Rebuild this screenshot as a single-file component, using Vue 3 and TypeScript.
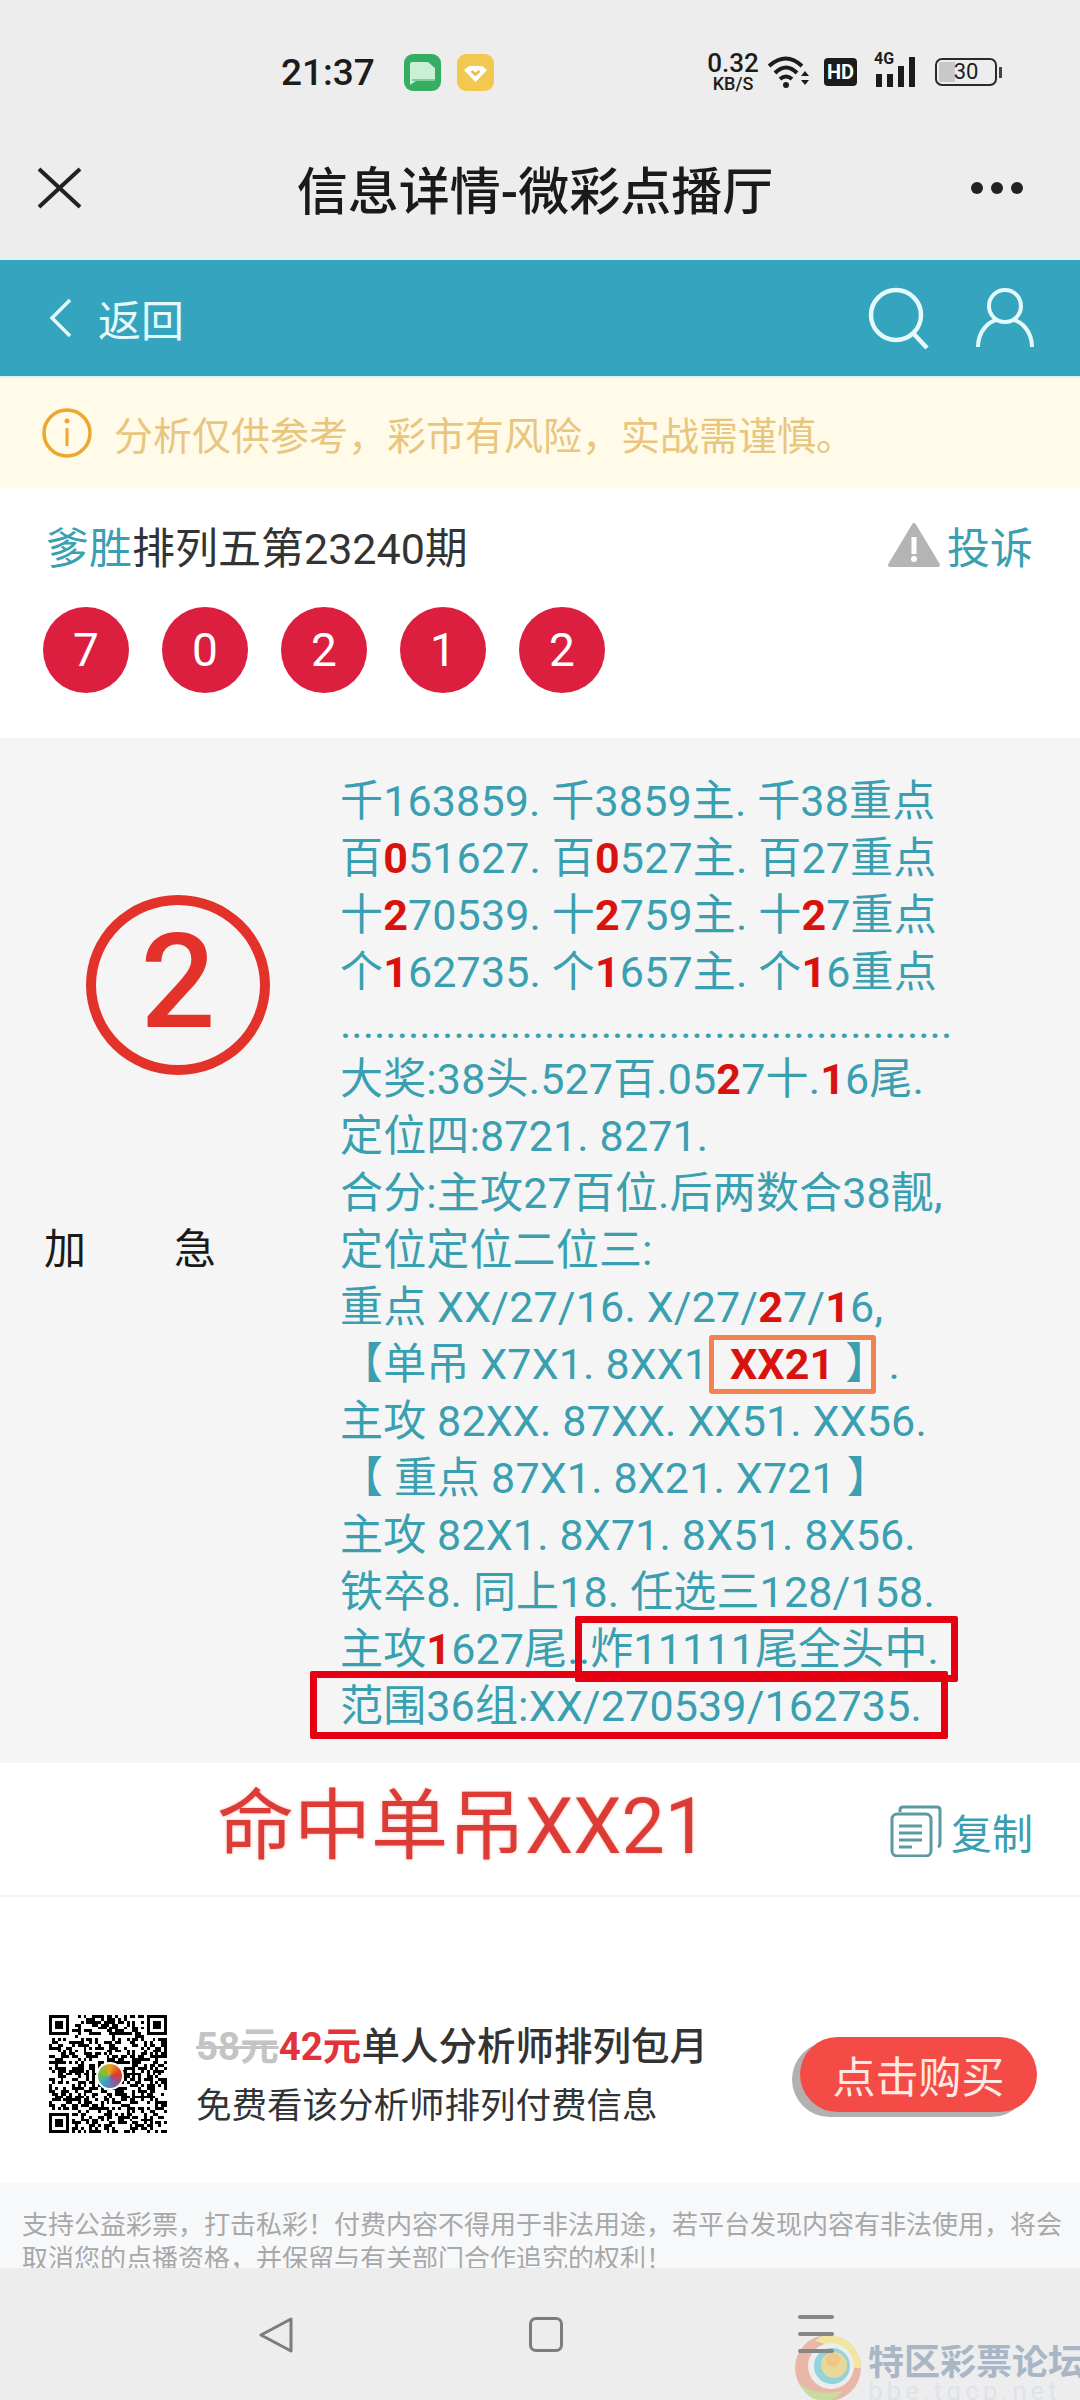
<template>
  <div class="page">
    <header class="top">
      <div class="status">
        <span class="time">21:37</span>
        <svg class="app-icon" width="37" height="37" viewBox="0 0 37 37">
          <rect width="37" height="37" rx="9" fill="#35ae63" />
          <path d="M6 10q0-2 2-2h16l7 6v11q0 2-2 2H12l-6 4z" fill="#c9efd4" />
          <path d="M8 26h23" stroke="#7fd09b" stroke-width="2" />
        </svg>
        <svg class="app-icon yellow" width="37" height="37" viewBox="0 0 37 37">
          <rect width="37" height="37" rx="9" fill="#f2c94e" />
          <path d="M7 16l5-4h13l5 4-11.500 12z" fill="#fff" />
          <path d="M14.500 17l4 3.500 4-3.500" fill="none" stroke="#e8b850" stroke-width="2.500" />
        </svg>
        <div class="speed">
          <span class="speed-num">0.32</span>
          <span class="speed-unit">KB/S</span>
        </div>
        <svg class="wifi" width="44" height="34" viewBox="0 0 44 34">
          <path d="M1 11Q18-4 34 11M7 18Q18 7 29 18M12 24q6-5 12 0" fill="none" stroke="#1c1c1c" stroke-width="4" />
          <circle cx="18" cy="30" r="3" fill="#1c1c1c" />
          <path d="M33 21l4-5 4 5zM33 25l4 5 4-5z" fill="#1c1c1c" />
        </svg>
        <span class="hd">HD</span>
        <div class="signal">
          <span class="four-g">4G</span>
          <svg width="42" height="30" viewBox="0 0 42 30">
            <rect x="2" y="17" width="6" height="13" fill="#1c1c1c" />
            <rect x="13" y="17" width="6" height="13" fill="#1c1c1c" />
            <rect x="24" y="9" width="6" height="21" fill="#1c1c1c" />
            <rect x="35" y="0" width="6" height="30" fill="#1c1c1c" />
          </svg>
        </div>
        <div class="battery">
          <div class="battery-body"><span class="battery-fill"></span><span class="battery-num">30</span></div>
          <span class="battery-tip"></span>
        </div>
      </div>
      <div class="title-row">
        <svg width="46" height="42" viewBox="0 0 46 42">
          <path d="M2 2l41 38M43 2L2 40" stroke="#222" stroke-width="4" fill="none" />
        </svg>
        <h1 class="title">信息详情-微彩点播厅</h1>
        <div class="more"><i></i><i></i><i></i></div>
      </div>
    </header>

    <nav class="bar">
      <svg width="24" height="40" viewBox="0 0 24 40">
        <path d="M21 2L3 20l18 18" fill="none" stroke="#e4f9fb" stroke-width="3.500" />
      </svg>
      <span class="back">返回</span>
      <svg class="search" width="62" height="62" viewBox="0 0 62 62">
        <circle cx="28" cy="28" r="25" fill="none" stroke="#e4f9fb" stroke-width="4.500" />
        <path d="M45 46l14 15" stroke="#e4f9fb" stroke-width="4.500" />
      </svg>
      <svg class="user" width="58" height="60" viewBox="0 0 58 60">
        <circle cx="29" cy="18" r="16" fill="none" stroke="#e4f9fb" stroke-width="4" />
        <path d="M2 59C2 43 13 33 21 32M56 59C56 43 45 33 37 32" fill="none" stroke="#e4f9fb" stroke-width="4" />
      </svg>
    </nav>

    <div class="notice">
      <svg width="50" height="50" viewBox="0 0 50 50">
        <circle cx="25" cy="25" r="23" fill="none" stroke="#eba72e" stroke-width="3.500" />
        <rect x="23.500" y="20" width="3" height="18" fill="#eba72e" />
        <circle cx="25" cy="13" r="2.500" fill="#eba72e" />
      </svg>
      <span>分析仅供参考，彩市有风险，实战需谨慎。</span>
    </div>

    <section class="summary">
      <div class="summary-head">
        <div class="issue"><span class="teal">爹胜</span>排列五第23240期</div>
        <div class="report">
          <svg width="54" height="46" viewBox="0 0 54 46">
            <path d="M27 3L3 43h48z" fill="#b4b4b4" stroke="#b4b4b4" stroke-width="4" stroke-linejoin="round" />
            <rect x="24.500" y="15" width="5" height="17" fill="#fff" />
            <circle cx="27" cy="37" r="3" fill="#fff" />
          </svg>
          <span class="teal">投诉</span>
        </div>
      </div>
      <div class="balls">
        <span v-for="(n, i) in balls" :key="i" class="ball">{{ n }}</span>
      </div>
    </section>

    <section class="detail">
      <div class="side">
        <div class="badge">2</div>
        <div class="urgent"><span>加</span><span>急</span></div>
      </div>
      <div class="content">
        <div v-for="(line, i) in parsedLines" :key="i" class="line" :class="{ 'line--dots': line.dots }">
          <template v-for="(part, j) in line.parts" :key="j">
            <b v-if="part.red" class="red">{{ part.text }}</b>
            <template v-else>{{ part.text }}</template>
          </template>
        </div>
        <span class="mark mark--orange"></span>
        <span class="mark mark--red-a"></span>
        <span class="mark mark--red-b"></span>
      </div>
    </section>

    <div class="result">
      <span class="hit">命中单吊XX21</span>
      <div class="copy">
        <svg width="52" height="52" viewBox="0 0 52 52">
          <path d="M10 7V5q0-3 3-3h34q3 0 3 3v33q0 3-2 4" fill="none" stroke="#5a9aa5" stroke-width="3" />
          <rect x="2" y="9" width="39" height="42" rx="5" fill="none" stroke="#5a9aa5" stroke-width="3" />
          <path d="M9 21h23M9 28h23M9 35h23M9 42h13" stroke="#5a9aa5" stroke-width="3" />
        </svg>
        <span class="teal">复制</span>
      </div>
    </div>

    <div class="promo">
      <div class="qr">
        <svg width="118" height="118" :viewBox="`0 0 ${qrSize} ${qrSize}`" shape-rendering="crispEdges">
          <path :d="qrPath" fill="#000" />
        </svg>
        <span class="qr-logo"></span>
      </div>
      <div class="promo-text">
        <div class="promo-main"><s class="old">58元</s><b class="now">42元</b>单人分析师排列包月</div>
        <div class="promo-sub">免费看该分析师排列付费信息</div>
      </div>
      <button class="buy">点击购买</button>
    </div>

    <p class="legal">支持公益彩票，打击私彩！付费内容不得用于非法用途，若平台发现内容有非法使用，将会取消您的点播资格，并保留与有关部门合作追究的权利！</p>

    <footer class="nav">
      <svg width="36" height="36" viewBox="0 0 36 36">
        <path d="M33 2v32L3 18z" fill="none" stroke="#7d7d7d" stroke-width="3" stroke-linejoin="round" />
      </svg>
      <span class="nav-home"></span>
    </footer>

    <div class="watermark">
      <svg class="wm-logo" width="70" height="66" viewBox="0 0 70 66">
        <circle cx="35" cy="33" r="33" fill="#e9b7a6" />
        <path d="M35 0a33 33 0 0 1 33 33H50Q48 12 22 6q6-6 13-6z" fill="#f1e6a0" />
        <path d="M6 48q14 14 44 8-8 10-17 10Q14 66 6 48z" fill="#c8dba0" />
        <circle cx="38" cy="31" r="23" fill="#ededed" />
        <circle cx="39" cy="31" r="18" fill="#93d3da" />
        <circle cx="41" cy="30" r="13" fill="#e8d89a" />
        <circle cx="40" cy="25" r="7" fill="#f0c78a" />
      </svg>
      <div class="wm-text">
        <span class="wm-name">特区彩票论坛</span>
        <span class="wm-url">bbe.tqcp.net</span>
      </div>
    </div>
    <div class="nav-menu"><i></i><i></i><i></i></div>
  </div>
</template>

<script setup lang="ts">
import { computed } from 'vue'

const balls = [7, 0, 2, 1, 2]

// *x* marks the digits shown in bold red
const lines = [
  '千163859. 千3859主. 千38重点',
  '百*0*51627. 百*0*527主. 百27重点',
  '十*2*70539. 十*2*759主. 十*2*7重点',
  '个*1*62735. 个*1*657主. 个*1*6重点',
  '.'.repeat(54),
  '大奖:38头.527百.05*2*7十.*1*6尾.',
  '定位四:8721. 8271.',
  '合分:主攻27百位.后两数合38靓,',
  '定位定位二位三:',
  '重点 XX/27/16. X/27/*2*7/*1*6,',
  '【单吊 X7X1. 8XX1  *XX21* 】.',
  '主攻 82XX. 87XX. XX51. XX56.',
  '【 重点 87X1. 8X21. X721 】',
  '主攻 82X1. 8X71. 8X51. 8X56.',
  '铁卒8. 同上18. 任选三128/158.',
  '主攻*1*627尾..炸11111尾全头中.',
  '范围36组:XX/270539/162735.',
]

const parsedLines = computed(() =>
  lines.map((line) => ({
    dots: line.startsWith('...'),
    parts: line.split('*').map((text, i) => ({ text, red: i % 2 === 1 })),
  })),
)

const qrSize = 41

const qrPath = computed(() => {
  const inFinder = (x: number, y: number) =>
    (x < 8 && y < 8) || (x >= qrSize - 8 && y < 8) || (x < 8 && y >= qrSize - 8)
  let seed = 20230824
  let d = ''
  for (let y = 0; y < qrSize; y++) {
    for (let x = 0; x < qrSize; x++) {
      seed = (seed * 1103515245 + 12345) % 2147483648
      if (!inFinder(x, y) && seed % 100 > 50) d += `M${x} ${y}h1v1h-1z`
    }
  }
  const finders = [
    [0, 0],
    [qrSize - 7, 0],
    [0, qrSize - 7],
  ]
  for (const [x, y] of finders) {
    d += `M${x} ${y}h7v1h-7zM${x} ${y + 6}h7v1h-7zM${x} ${y + 1}h1v5h-1zM${x + 6} ${y + 1}h1v5h-1zM${x + 2} ${y + 2}h3v3h-3z`
  }
  return d
})
</script>

<style>
html,
body {
  margin: 0;
  background: #fff;
}
</style>

<style scoped>
.page {
  position: relative;
  width: 1080px;
  height: 2400px;
  overflow: hidden;
  background: #fff;
  font-family: Roboto, 'Noto Sans CJK SC', sans-serif;
  color: #333;
}

.top {
  height: 258px;
  background: #ededed;
}

.status {
  display: flex;
  align-items: center;
  height: 144px;
  padding-left: 281px;
  box-sizing: border-box;
  color: #1c1c1c;
}

.time {
  width: 123px;
  font-size: 37px;
  font-weight: 500;
}

.app-icon {
  margin-right: 16px;
}

.app-icon.yellow {
  margin-right: 214px;
}

.speed {
  display: flex;
  flex-direction: column;
  align-items: center;
  width: 50px;
  line-height: 1;
  font-weight: 500;
}

.speed-num {
  font-size: 26px;
  line-height: 24px;
}

.speed-unit {
  font-size: 18px;
  line-height: 18px;
}

.wifi {
  margin-left: 10px;
}

.hd {
  width: 33px;
  height: 28px;
  margin-left: 12px;
  border-radius: 4px;
  background: #1c1c1c;
  color: #fff;
  font-size: 20px;
  font-weight: 700;
  line-height: 28px;
  text-align: center;
}

.signal {
  position: relative;
  width: 45px;
  height: 30px;
  margin-left: 17px;
}

.four-g {
  position: absolute;
  left: 0;
  top: -6px;
  font-size: 16px;
  font-weight: 700;
  line-height: 16px;
}

.signal svg {
  display: block;
}

.battery {
  display: flex;
  align-items: center;
  margin-left: 16px;
}

.battery-body {
  position: relative;
  width: 62px;
  height: 28px;
  border: 2px solid #2a2a2a;
  border-radius: 7px;
  box-sizing: border-box;
  overflow: hidden;
}

.battery-fill {
  position: absolute;
  left: 2px;
  top: 2px;
  bottom: 2px;
  width: 16px;
  background: #c8c8c8;
}

.battery-num {
  position: relative;
  display: block;
  font-size: 22px;
  line-height: 24px;
  text-align: center;
}

.battery-tip {
  width: 3px;
  height: 11px;
  margin-left: 2px;
  background: #444;
}

.title-row {
  display: flex;
  align-items: center;
  justify-content: space-between;
  height: 88px;
  padding: 0 57px 0 37px;
}

.title {
  margin: 0 0 0 16px;
  font-size: 51px;
  font-weight: 500;
  color: #1a1a1a;
}

.more {
  display: flex;
  gap: 8px;
}

.more i {
  width: 12px;
  height: 12px;
  border-radius: 50%;
  background: #222;
}

.title-row {
  margin-bottom: -2px;
}

.bar {
  position: relative;
  display: flex;
  align-items: center;
  height: 120px;
  padding-left: 49px;
  box-sizing: border-box;
  background: #35a4be;
  border-top: 2px solid #d8f4f4;
  border-bottom: 2px solid #d8f4f4;
}

.back {
  margin-left: 25px;
  font-size: 43px;
  color: #e4f9fb;
}

.search {
  margin-left: auto;
}

.user {
  margin: 0 46px 0 46px;
}

.notice {
  display: flex;
  align-items: center;
  height: 110px;
  padding-left: 42px;
  gap: 22px;
  background: #fffbe8;
  font-size: 39px;
  color: #e8c67f;
}

.summary {
  height: 250px;
  box-sizing: border-box;
  padding: 28px 47px 0 43px;
}

.summary-head {
  display: flex;
  align-items: center;
  justify-content: space-between;
  height: 57px;
  font-size: 43px;
}

.issue {
  padding-left: 3px;
}

.report {
  display: flex;
  align-items: center;
  gap: 6px;
}

.teal {
  color: #3a9fb0;
}

.balls {
  display: flex;
  gap: 33px;
  margin-top: 34px;
}

.ball {
  width: 86px;
  height: 86px;
  border-radius: 50%;
  background: #dc1f3f;
  color: #fff;
  font-size: 46px;
  line-height: 86px;
  text-align: center;
}

.detail {
  display: flex;
  height: 1025px;
  background: #f5f5f5;
}

.side {
  display: flex;
  flex-direction: column;
  width: 340px;
  padding: 157px 0 0 44px;
  box-sizing: border-box;
}

.badge {
  display: flex;
  align-items: center;
  justify-content: center;
  width: 184px;
  height: 180px;
  margin-left: 42px;
  padding-bottom: 6px;
  border: 10px solid #e2322a;
  border-radius: 50%;
  box-sizing: border-box;
  font-size: 132px;
  font-weight: 500;
  color: #e2322a;
}

.urgent {
  display: flex;
  gap: 88px;
  margin-top: 146px;
  font-size: 42px;
  line-height: 57px;
  color: #1a1a1a;
}

.content {
  position: relative;
  flex: 1;
  padding-top: 35px;
  font-size: 43px;
  line-height: 57px;
  letter-spacing: 0.15px;
  color: #3a9fb0;
  white-space: pre;
}

.line--dots {
  height: 50px;
  line-height: 44px;
  letter-spacing: 0;
}

.red {
  color: #d9120e;
}

.mark {
  position: absolute;
  box-sizing: border-box;
}

.mark--orange {
  left: 369px;
  top: 597px;
  width: 167px;
  height: 59px;
  border: 5px solid #f48150;
  border-radius: 3px;
}

.mark--red-a {
  left: 235px;
  top: 878px;
  width: 383px;
  height: 66px;
  border: 7px solid #e60012;
  border-radius: 2px;
}

.mark--red-b {
  left: -30px;
  top: 933px;
  width: 638px;
  height: 68px;
  border: 7px solid #e60012;
  border-radius: 2px;
}

.result {
  display: flex;
  align-items: center;
  justify-content: space-between;
  height: 134px;
  box-sizing: border-box;
  padding: 0 47px 0 217px;
  border-bottom: 2px solid #f4f4f4;
}

.hit {
  margin-bottom: 20px;
  font-size: 77px;
  color: #dd3b35;
  text-shadow: 0 0 3px rgba(221, 59, 53, 0.4);
}

.copy {
  display: flex;
  align-items: center;
  gap: 9px;
  margin-top: 4px;
  font-size: 41px;
}

.promo {
  display: flex;
  align-items: center;
  height: 286px;
  box-sizing: border-box;
  padding: 66px 43px 0 49px;
}

.qr {
  position: relative;
  width: 118px;
  height: 118px;
  margin-top: 2px;
}

.qr svg {
  display: block;
}

.qr-logo {
  position: absolute;
  left: 47px;
  top: 47px;
  width: 24px;
  height: 24px;
  border: 2px solid #fff;
  border-radius: 50%;
  background: conic-gradient(#e8a020, #e23a2a, #8a5a9a, #3aa0d0, #7ac040, #e8a020);
}

.promo-text {
  margin-top: 6px;
  margin-left: 29px;
}

.promo-main {
  font-size: 38.5px;
  line-height: 60px;
  font-weight: 500;
  color: #333;
}

.old {
  font-weight: 700;
  color: #c4c4c4;
}

.now {
  color: #e2323c;
}

.promo-sub {
  font-size: 35.5px;
  line-height: 58px;
  color: #333;
}

.buy {
  width: 237px;
  height: 75px;
  margin-top: 2px;
  margin-left: auto;
  padding: 0;
  border: 0;
  border-radius: 38px;
  background: #f44b47;
  box-shadow: -8px 5px 0 #b3b0b0;
  color: #fbe9e4;
  font-family: inherit;
  font-size: 43px;
}

.legal {
  height: 85px;
  margin: 0;
  padding: 25px 16px 0 22px;
  box-sizing: border-box;
  overflow: hidden;
  background: #f7f8fa;
  font-size: 26px;
  line-height: 34px;
  color: #a8a8a8;
}

.nav {
  display: flex;
  align-items: flex-start;
  height: 132px;
  padding: 49px 0 0 258px;
  box-sizing: border-box;
  background: #ededed;
}

.nav-home {
  width: 34px;
  height: 35px;
  margin-left: 235px;
  border: 3px solid #7d7d7d;
  border-radius: 7px;
  box-sizing: border-box;
}

/* the menu lines lie over the watermark */
.nav-menu {
  position: absolute;
  left: 798px;
  top: 2315px;
  display: flex;
  flex-direction: column;
  gap: 13px;
}

.nav-menu i {
  display: block;
  width: 36px;
  height: 4px;
  border-radius: 2px;
  background: #868686;
}

.watermark {
  position: absolute;
  left: 793px;
  top: 2335px;
  display: flex;
  width: 287px;
}

.wm-logo {
  flex: none;
}

.wm-text {
  display: flex;
  flex-direction: column;
  margin-top: 10px;
  margin-left: 5px;
  overflow: hidden;
}

.wm-name {
  font-size: 36px;
  font-weight: 700;
  line-height: 36px;
  color: #a9b6c6;
  white-space: nowrap;
}

.wm-url {
  font-size: 26px;
  line-height: 20px;
  letter-spacing: 4px;
  color: #dde3ea;
  white-space: nowrap;
}
</style>
